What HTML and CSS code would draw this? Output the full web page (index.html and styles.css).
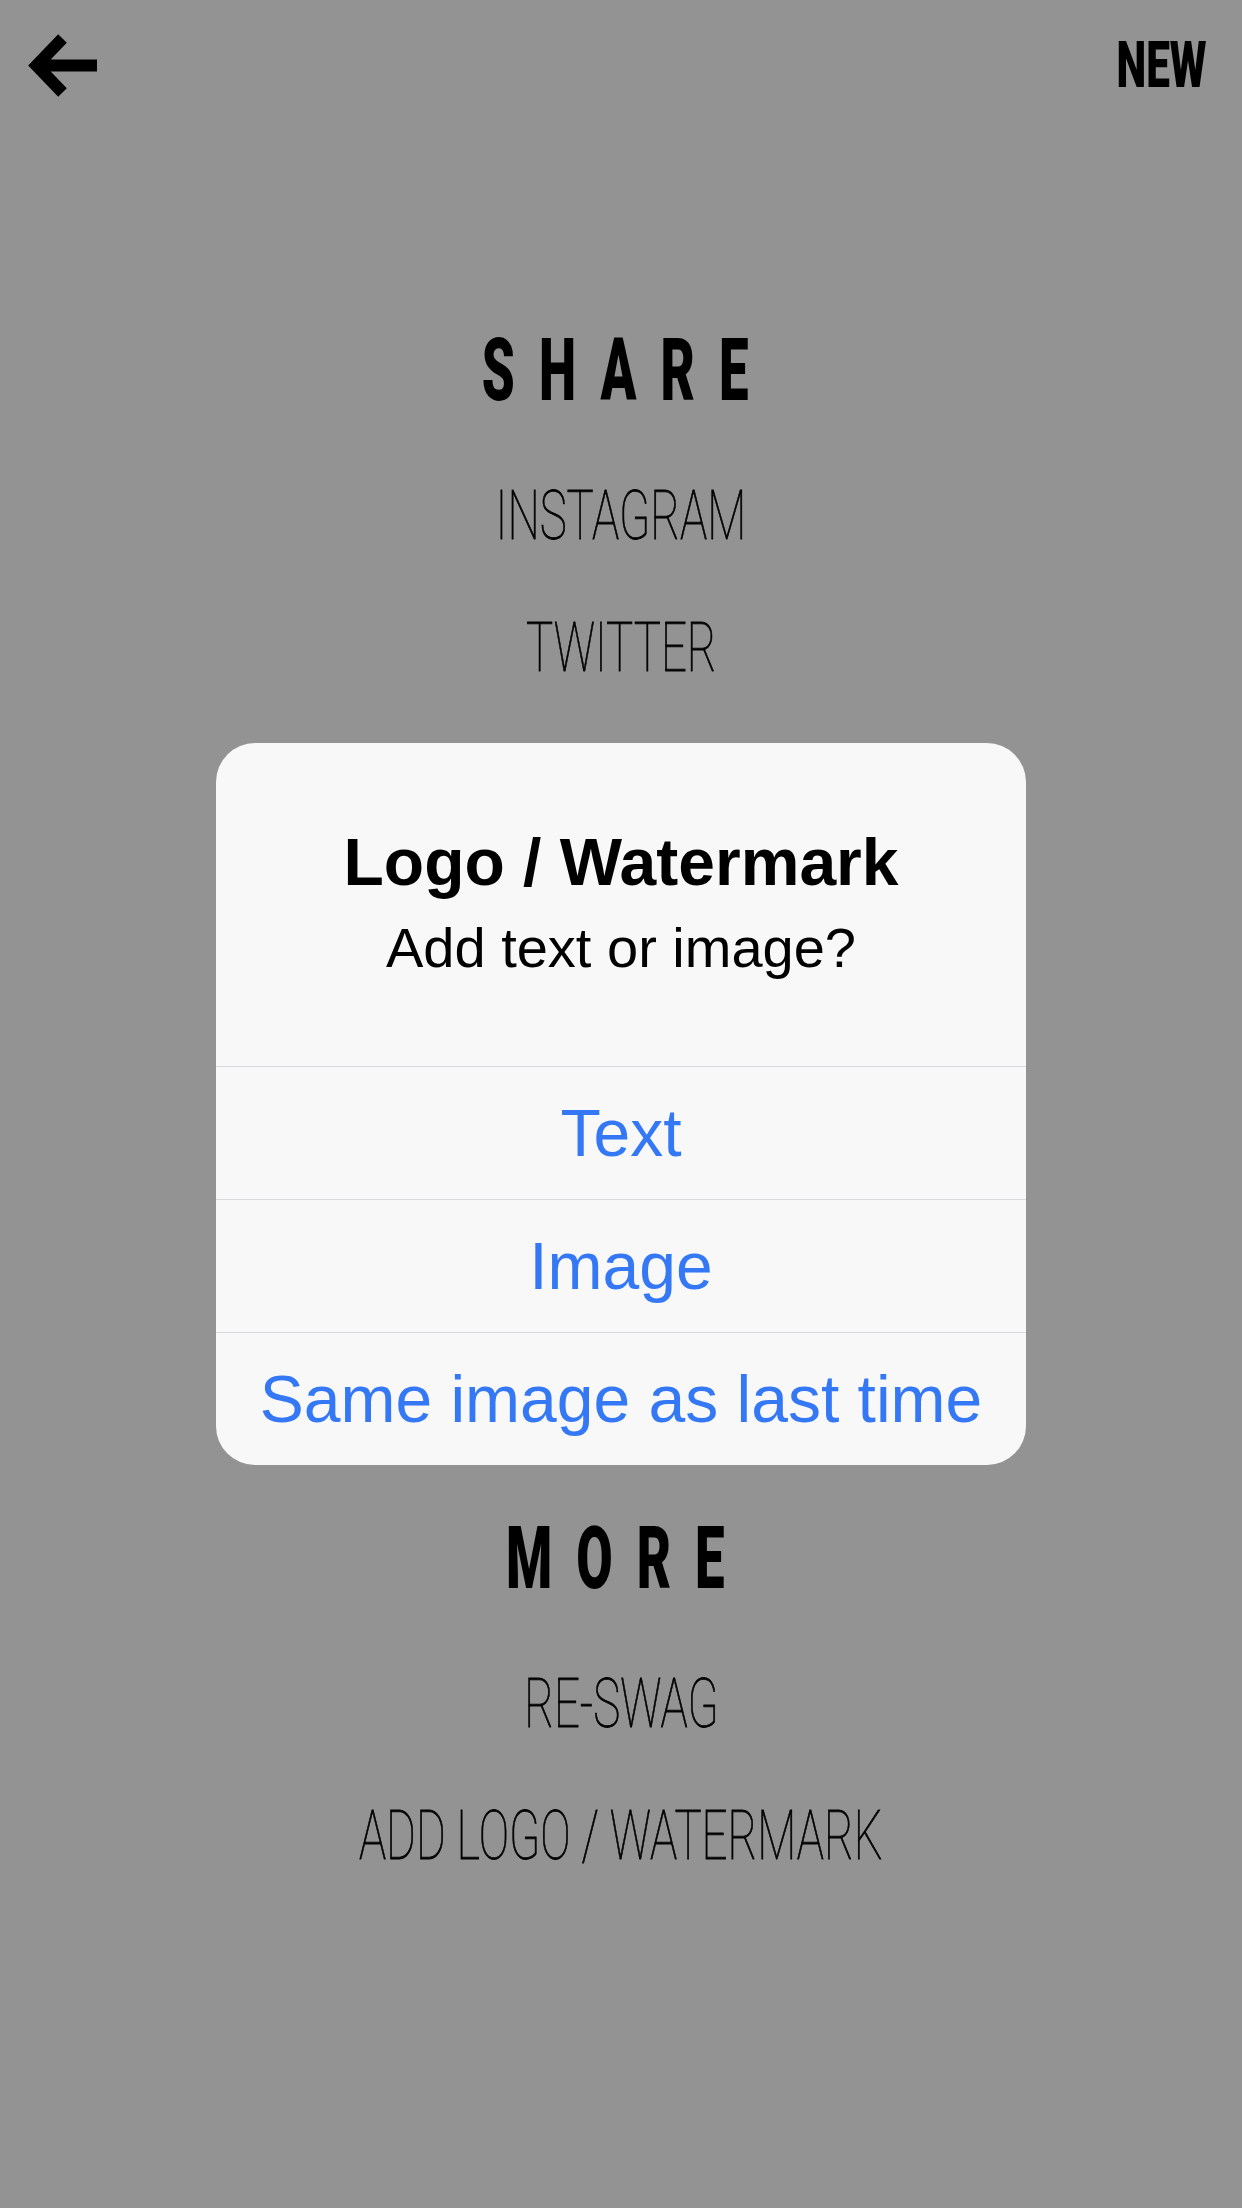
FILE: index.html
```html
<!DOCTYPE html>
<html lang="en">
<head>
  <meta charset="UTF-8">
  <title>Share</title>
  <link rel="stylesheet" href="styles.css">
</head>
<body>
  <div class="screen">
    <div class="topbar">
      <button class="back-btn" aria-label="Back">
        <svg width="72" height="72" viewBox="0 0 72 72">
          <path d="M36.5 9.5 L10.5 36.5 L36.5 63.5 M10.5 36.5 H71" fill="none" stroke="#000" stroke-width="12" stroke-linejoin="miter"/>
        </svg>
      </button>
      <button class="new-btn"><span>NEW</span></button>
    </div>

    <div class="menu">
      <!-- Share section -->
      <div class="group">
        <h2 class="group-title"><span>SHARE</span></h2>
        <ul class="items">
          <li><span>INSTAGRAM</span></li>
          <li><span>TWITTER</span></li>
        </ul>
      </div>

      <!-- More section -->
      <div class="group">
        <h2 class="group-title"><span>MORE</span></h2>
        <ul class="items">
          <li><span>RE-SWAG</span></li>
          <li><span>ADD LOGO / WATERMARK</span></li>
        </ul>
      </div>
    </div>
  </div>

  <div class="overlay">
    <div class="alert">
      <div class="alert-head">
        <h3 class="alert-title">Logo / Watermark</h3>
        <p class="alert-msg">Add text or image?</p>
      </div>
      <button class="alert-action">Text</button>
      <button class="alert-action">Image</button>
      <button class="alert-action">Same image as last time</button>
    </div>
  </div>
</body>
</html>
```

FILE: styles.css
```css
* {
  box-sizing: border-box;
}

body {
  margin: 0;
  width: 1242px;
  height: 2208px;
  overflow: hidden;
  background-color: #939393;
  font-family: "Roboto", "Liberation Sans", sans-serif;
  color: #000;
}

button {
  background: none;
  border: none;
  padding: 0;
  margin: 0;
  font: inherit;
  color: inherit;
  cursor: pointer;
}

.topbar {
  display: flex;
  justify-content: space-between;
  align-items: flex-start;
  height: 116px;
  padding: 29px 35px 0 26px;
}

.back-btn svg {
  display: block;
}

.new-btn {
  margin-top: 4px;
  font-size: 65px;
  font-weight: 900;
  line-height: 65px;
}

.new-btn span {
  display: inline-block;
  transform: scaleX(0.65);
  transform-origin: right center;
}

.menu {
  padding-top: 204px;
  text-align: center;
}

.group + .group {
  margin-top: 794px;
}

.group-title {
  margin: 0 0 30px;
  font-size: 88px;
  font-weight: 900;
  line-height: 100px;
}

.group-title span {
  display: inline-block;
  letter-spacing: 40px;
  padding-left: 20px;
  transform: scaleX(0.6);
}

.items {
  list-style: none;
  margin: 0;
  padding: 0;
}

.items li {
  font-size: 69px;
  font-weight: 100;
  line-height: 132px;
  -webkit-text-stroke: 0.8px #000;
}

.items li span {
  display: inline-block;
  transform: scaleX(0.66);
}

/* alert */
.overlay {
  position: fixed;
  top: 0;
  left: 0;
  right: 0;
  bottom: 0;
  display: flex;
  justify-content: center;
  align-items: center;
}

.alert {
  width: 810px;
  background-color: #f8f8f8;
  border-radius: 39px;
  overflow: hidden;
  font-family: "Liberation Sans", Arial, sans-serif;
  text-align: center;
}

.alert-head {
  padding: 79px 30px 83px;
}

.alert-title {
  margin: 0;
  font-size: 66px;
  font-weight: bold;
  line-height: 80px;
}

.alert-msg {
  margin: 11px 0 0;
  font-size: 56px;
  line-height: 70px;
}

.alert-action {
  display: block;
  width: 100%;
  height: 133px;
  border-top: 1px solid #d9d9dd;
  font-size: 66px;
  line-height: 132px;
  color: #3478f6;
}
```
